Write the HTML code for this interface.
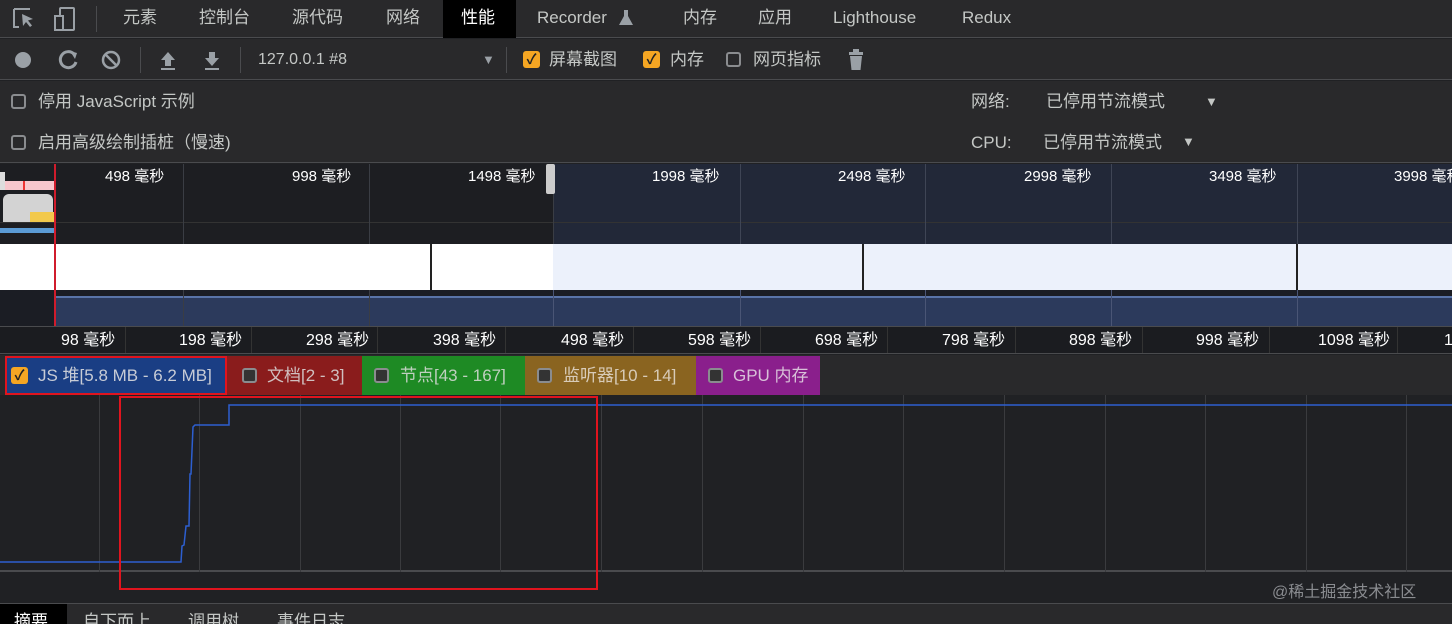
<!DOCTYPE html>
<html><head><meta charset="utf-8"><style>
*{margin:0;padding:0;box-sizing:border-box}
html,body{width:1452px;height:624px;overflow:hidden}
body{background:#202124;font-family:"Liberation Sans","Noto Sans CJK SC",sans-serif;color:#c4c7c5;position:relative;font-size:17px}
.a{position:absolute;white-space:nowrap;line-height:20px}
.cb{position:absolute;width:15px;height:15px;border:2px solid #8a8c8f;border-radius:3px}
.cbo{position:absolute;width:17px;height:17px;background:#f5a623;border-radius:3px;color:#222;font-size:14px;line-height:17px;text-align:center;font-weight:bold}
.vl{position:absolute;width:1px}
</style></head><body>
<!-- tab bar -->
<div class="a" style="left:0;top:0;width:1452px;height:38px;background:#29292b;border-bottom:1px solid #4a4b4e"></div>
<svg class="a" style="left:10px;top:5px" width="80" height="28" viewBox="0 0 80 28">
<path d="M4 4h16M4 4v18h5" stroke="#9aa0a6" stroke-width="2" fill="none"/>
<path d="M12 9l11 5-5 1.5 4 5-2 1.5-4-5-3 4z" fill="#9aa0a6"/>
<rect x="50" y="3" width="14" height="22" rx="1" stroke="#9aa0a6" stroke-width="2" fill="none"/>
<rect x="45" y="11" width="8" height="14" stroke="#9aa0a6" stroke-width="2" fill="#29292b"/>
</svg>
<div class="vl" style="left:96px;top:6px;height:26px;background:#4a4b4e"></div>
<div class="a" style="left:123px;top:8px">元素</div>
<div class="a" style="left:199px;top:8px">控制台</div>
<div class="a" style="left:292px;top:8px">源代码</div>
<div class="a" style="left:386px;top:8px">网络</div>
<div class="a" style="left:443px;top:0;width:73px;height:38px;background:#000"></div>
<div class="a" style="left:461px;top:8px;color:#fff">性能</div>
<div class="a" style="left:537px;top:8px">Recorder</div>
<svg class="a" style="left:618px;top:9px" width="16" height="18"><path d="M5 1h6M6 1v6L1 16h14L10 7V1" fill="#9aa0a6"/></svg>
<div class="a" style="left:683px;top:8px">内存</div>
<div class="a" style="left:758px;top:8px">应用</div>
<div class="a" style="left:833px;top:8px">Lighthouse</div>
<div class="a" style="left:962px;top:8px">Redux</div>
<!-- toolbar -->
<div class="a" style="left:0;top:39px;width:1452px;height:41px;background:#29292b;border-bottom:1px solid #4a4b4e"></div>
<svg class="a" style="left:10px;top:48px" width="240" height="24" viewBox="0 0 240 24">
<circle cx="13" cy="12" r="8" fill="#9aa0a6"/>
<path d="M64 6a8 8 0 1 0 2 8" stroke="#9aa0a6" stroke-width="3" fill="none"/><path d="M60 3l7 2-2 6z" fill="#9aa0a6"/>
<circle cx="101" cy="12" r="8" stroke="#9aa0a6" stroke-width="2.5" fill="none"/><path d="M95 6l12 12" stroke="#9aa0a6" stroke-width="2.5"/>
<path d="M158 4l-7 8h4v6h6v-6h4z M151 20h14v2h-14z" fill="#9aa0a6"/>
<path d="M202 18l-7-8h4V4h6v6h4z M195 20h14v2h-14z" fill="#9aa0a6"/>
</svg>
<div class="vl" style="left:140px;top:47px;height:26px;background:#4a4b4e"></div>
<div class="vl" style="left:240px;top:47px;height:26px;background:#4a4b4e"></div>
<div class="a" style="left:258px;top:50px;font-size:16px">127.0.0.1 #8</div>
<div class="a" style="left:482px;top:50px;font-size:13px;color:#9aa0a6">▼</div>
<div class="vl" style="left:506px;top:47px;height:26px;background:#4a4b4e"></div>
<div class="cbo" style="left:523px;top:51px">✓</div>
<div class="a" style="left:549px;top:50px">屏幕截图</div>
<div class="cbo" style="left:643px;top:51px">✓</div>
<div class="a" style="left:670px;top:50px">内存</div>
<div class="cb" style="left:726px;top:52px"></div>
<div class="a" style="left:753px;top:50px">网页指标</div>
<svg class="a" style="left:848px;top:49px" width="16" height="22"><rect x="1" y="3" width="14" height="3" fill="#9aa0a6"/><rect x="5" y="0" width="6" height="3" fill="#9aa0a6"/><path d="M2 7h12l-1.5 14h-9z" fill="#9aa0a6"/></svg>
<!-- settings -->
<div class="a" style="left:0;top:81px;width:1452px;height:82px;background:#29292b;border-bottom:1px solid #4a4b4e"></div>
<div class="cb" style="left:11px;top:94px"></div>
<div class="a" style="left:38px;top:92px">停用 JavaScript 示例</div>
<div class="cb" style="left:11px;top:135px"></div>
<div class="a" style="left:38px;top:133px">启用高级绘制插桩（慢速)</div>
<div class="a" style="left:971px;top:92px">网络:</div>
<div class="a" style="left:1046px;top:92px">已停用节流模式</div>
<div class="a" style="left:1205px;top:92px;font-size:13px">▼</div>
<div class="a" style="left:971px;top:133px">CPU:</div>
<div class="a" style="left:1043px;top:133px">已停用节流模式</div>
<div class="a" style="left:1182px;top:132px;font-size:13px">▼</div>
<!-- overview -->
<div class="a" style="left:0;top:164px;width:1452px;height:80px;background:#1d1e22"></div>
<div class="a" style="left:553px;top:164px;width:899px;height:80px;background:#222838"></div>
<div class="a" style="left:0;top:244px;width:1452px;height:46px;background:#fff"></div>
<div class="a" style="left:553px;top:244px;width:899px;height:46px;background:#ecf1fb"></div>
<div class="vl" style="left:430px;top:244px;height:46px;background:#222;width:2px"></div>
<div class="vl" style="left:862px;top:244px;height:46px;background:#222;width:2px"></div>
<div class="vl" style="left:1296px;top:244px;height:46px;background:#222;width:2px"></div>
<div class="a" style="left:0;top:290px;width:1452px;height:36px;background:#1b1d24"></div>
<div class="a" style="left:56px;top:296px;width:1396px;height:30px;background:#2c3a5c;border-top:2px solid #5a74a8"></div>
<div class="a" style="left:0;top:222px;width:1452px;height:1px;background:#333"></div>
<div class="a" style="left:0;top:172px;width:5px;height:18px;background:#ddd"></div>
<div class="a" style="left:5px;top:181px;width:49px;height:9px;background:#f7c6cc"></div>
<div class="a" style="left:23px;top:181px;width:2px;height:9px;background:#e33"></div>
<div class="a" style="left:3px;top:194px;width:50px;height:28px;background:#d3d3d3;border-radius:6px 6px 0 0"></div>
<div class="a" style="left:30px;top:212px;width:24px;height:10px;background:#f2c94c"></div>
<div class="a" style="left:0;top:228px;width:55px;height:5px;background:#5b9bd5"></div>
<div class="vl" style="left:183px;top:164px;height:80px;background:#3a3d44"></div>
<div class="vl" style="left:369px;top:164px;height:80px;background:#3a3d44"></div>
<div class="vl" style="left:553px;top:164px;height:80px;background:#3a3d44"></div>
<div class="vl" style="left:740px;top:164px;height:80px;background:#3f4555"></div>
<div class="vl" style="left:925px;top:164px;height:80px;background:#3f4555"></div>
<div class="vl" style="left:1111px;top:164px;height:80px;background:#3f4555"></div>
<div class="vl" style="left:1297px;top:164px;height:80px;background:#3f4555"></div>
<div class="vl" style="left:183px;top:290px;height:36px;background:#3a3d44"></div>
<div class="vl" style="left:369px;top:290px;height:36px;background:#3a3d44"></div>
<div class="vl" style="left:553px;top:290px;height:36px;background:#4a5575"></div>
<div class="vl" style="left:740px;top:290px;height:36px;background:#4a5575"></div>
<div class="vl" style="left:925px;top:290px;height:36px;background:#4a5575"></div>
<div class="vl" style="left:1111px;top:290px;height:36px;background:#4a5575"></div>
<div class="vl" style="left:1297px;top:290px;height:36px;background:#4a5575"></div>
<div class="a" style="left:54px;top:164px;width:2px;height:162px;background:#d01c2c"></div>
<div class="a" style="left:546px;top:164px;width:9px;height:30px;background:#ccc;border-radius:2px"></div>
<div class="a" style="left:105px;top:167px;color:#fff;font-size:15px">498 毫秒</div>
<div class="a" style="left:292px;top:167px;color:#fff;font-size:15px">998 毫秒</div>
<div class="a" style="left:468px;top:167px;color:#fff;font-size:15px">1498 毫秒</div>
<div class="a" style="left:652px;top:167px;color:#fff;font-size:15px">1998 毫秒</div>
<div class="a" style="left:838px;top:167px;color:#fff;font-size:15px">2498 毫秒</div>
<div class="a" style="left:1024px;top:167px;color:#fff;font-size:15px">2998 毫秒</div>
<div class="a" style="left:1209px;top:167px;color:#fff;font-size:15px">3498 毫秒</div>
<div class="a" style="left:1394px;top:167px;color:#fff;font-size:15px">3998 毫秒</div>
<!-- ruler -->
<div class="a" style="left:0;top:326px;width:1452px;height:28px;background:#1b1c20;border-bottom:1px solid #4a4b4e;border-top:1px solid #4a4b4e"></div>
<div class="vl" style="left:125px;top:327px;height:26px;background:#333"></div><div class="vl" style="left:251px;top:327px;height:26px;background:#333"></div><div class="vl" style="left:377px;top:327px;height:26px;background:#333"></div><div class="vl" style="left:505px;top:327px;height:26px;background:#333"></div><div class="vl" style="left:633px;top:327px;height:26px;background:#333"></div><div class="vl" style="left:760px;top:327px;height:26px;background:#333"></div><div class="vl" style="left:887px;top:327px;height:26px;background:#333"></div><div class="vl" style="left:1015px;top:327px;height:26px;background:#333"></div><div class="vl" style="left:1142px;top:327px;height:26px;background:#333"></div><div class="vl" style="left:1269px;top:327px;height:26px;background:#333"></div><div class="vl" style="left:1397px;top:327px;height:26px;background:#333"></div>
<div class="a" style="left:0;top:331px;width:1452px;height:20px;font-size:16px;color:#fff">
<span class="a" style="left:61px;top:0">98 毫秒</span><span class="a" style="left:179px;top:0">198 毫秒</span><span class="a" style="left:306px;top:0">298 毫秒</span><span class="a" style="left:433px;top:0">398 毫秒</span><span class="a" style="left:561px;top:0">498 毫秒</span><span class="a" style="left:688px;top:0">598 毫秒</span><span class="a" style="left:815px;top:0">698 毫秒</span><span class="a" style="left:942px;top:0">798 毫秒</span><span class="a" style="left:1069px;top:0">898 毫秒</span><span class="a" style="left:1196px;top:0">998 毫秒</span><span class="a" style="left:1318px;top:0">1098 毫秒</span><span class="a" style="left:1444px;top:0">1</span></div>
<!-- legend -->
<div class="a" style="left:0;top:355px;width:1452px;height:40px;background:#29292b"></div>
<div class="a" style="left:5px;top:356px;width:222px;height:39px;background:#1a3e84;border:2px solid #e0141e"></div>
<div class="a" style="left:227px;top:356px;width:135px;height:39px;background:#8a1c1c"></div>
<div class="a" style="left:362px;top:356px;width:163px;height:39px;background:#1e8a24"></div>
<div class="a" style="left:525px;top:356px;width:171px;height:39px;background:#8a6420"></div>
<div class="a" style="left:696px;top:356px;width:124px;height:39px;background:#8a1f8c"></div>
<div class="cbo" style="left:11px;top:367px">✓</div>
<div class="a" style="left:38px;top:366px;color:#c8ccd6">JS 堆[5.8 MB - 6.2 MB]</div>
<div class="cb" style="left:242px;top:368px;background:#333"></div><div class="a" style="left:267px;top:366px;color:#d0c0c0">文档[2 - 3]</div>
<div class="cb" style="left:374px;top:368px;background:#333"></div><div class="a" style="left:400px;top:366px;color:#c0d0c0">节点[43 - 167]</div>
<div class="cb" style="left:537px;top:368px;background:#333"></div><div class="a" style="left:563px;top:366px;color:#d8cbb8">监听器[10 - 14]</div>
<div class="cb" style="left:708px;top:368px;background:#333"></div><div class="a" style="left:733px;top:366px;color:#d8c0d8">GPU 内存</div>
<!-- chart -->
<div class="a" style="left:0;top:395px;width:1452px;height:177px;background:#202124;border-bottom:2px solid #4a4b4e"></div>
<div class="vl" style="left:99px;top:395px;height:177px;background:#3a3b3e"></div><div class="vl" style="left:199px;top:395px;height:177px;background:#3a3b3e"></div><div class="vl" style="left:300px;top:395px;height:177px;background:#3a3b3e"></div><div class="vl" style="left:400px;top:395px;height:177px;background:#3a3b3e"></div><div class="vl" style="left:500px;top:395px;height:177px;background:#3a3b3e"></div><div class="vl" style="left:601px;top:395px;height:177px;background:#3a3b3e"></div><div class="vl" style="left:702px;top:395px;height:177px;background:#3a3b3e"></div><div class="vl" style="left:803px;top:395px;height:177px;background:#3a3b3e"></div><div class="vl" style="left:903px;top:395px;height:177px;background:#3a3b3e"></div><div class="vl" style="left:1004px;top:395px;height:177px;background:#3a3b3e"></div><div class="vl" style="left:1105px;top:395px;height:177px;background:#3a3b3e"></div><div class="vl" style="left:1205px;top:395px;height:177px;background:#3a3b3e"></div><div class="vl" style="left:1306px;top:395px;height:177px;background:#3a3b3e"></div><div class="vl" style="left:1406px;top:395px;height:177px;background:#3a3b3e"></div>
<svg class="a" style="left:0;top:0" width="1452" height="624"><polyline points="0,562 181,562 182,546 184,545 186,526 189,526 190,474 191,474 193,427 195,425 229,425 229,405 1452,405" fill="none" stroke="#2d5fd0" stroke-width="1.5"/>
<rect x="120" y="397" width="477" height="192" fill="none" stroke="#e0141e" stroke-width="2"/></svg>
<div class="a" style="left:1272px;top:583px;color:#8a8c90;font-size:16px">@稀土掘金技术社区</div>
<!-- bottom tabs -->
<div class="a" style="left:0;top:603px;width:1452px;height:21px;background:#29292b;border-top:1px solid #4a4b4e"></div>
<div class="a" style="left:0;top:604px;width:67px;height:20px;background:#000"></div>
<div class="a" style="left:14px;top:612px;color:#fff">摘要</div>
<div class="a" style="left:83px;top:612px">自下而上</div>
<div class="a" style="left:188px;top:612px">调用树</div>
<div class="a" style="left:277px;top:612px">事件日志</div>
</body></html>
